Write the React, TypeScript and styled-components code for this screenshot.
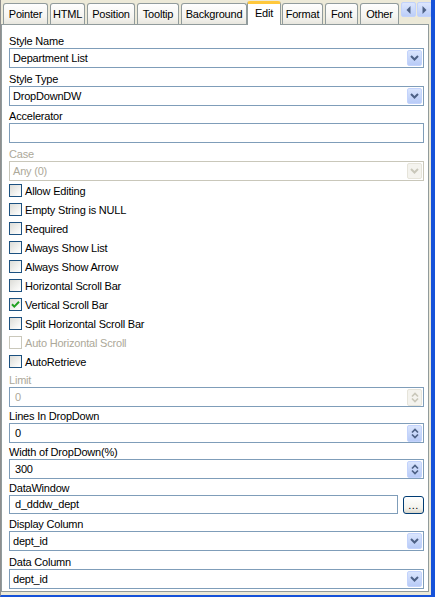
import React from "react";
import styled, { createGlobalStyle } from "styled-components";

const GlobalStyle = createGlobalStyle`
  html, body { margin: 0; padding: 0; }
  body { background: #ECE9D8; }
`;

const Window = styled.div`
  width: 435px;
  height: 597px;
  box-sizing: border-box;
  background: #ECE9D8;
  border-left: 1px solid #8E8E8E;
  border-right: 4px solid #1652D9;
  border-bottom: 2px solid #1652D9;
  display: flex;
  flex-direction: column;
  overflow: hidden;
  font-family: "Liberation Sans", Arial, sans-serif;
  font-size: 11px;
  letter-spacing: -0.2px;
  color: #000;
`;

const TabStrip = styled.div`
  height: 24px;
  flex: none;
  display: flex;
  align-items: flex-end;
  gap: 2px;
  padding-left: 2px;
  padding-right: 1px;
`;

const Tab = styled.div<{ $w: number; $sel?: boolean }>`
  width: ${(p) => p.$w}px;
  height: ${(p) => (p.$sel ? 24 : 21)}px;
  box-sizing: border-box;
  flex: none;
  display: flex;
  justify-content: center;
  padding-top: ${(p) => (p.$sel ? 3 : 4)}px;
  line-height: 13px;
  border: 1px solid #919B9C;
  border-bottom: none;
  border-radius: 3px 3px 0 0;
  background: ${(p) =>
    p.$sel
      ? "#FFFFFF"
      : "linear-gradient(#FEFEFE, #F5F4F0 65%, #E8E6DE)"};
  border-top: ${(p) => (p.$sel ? "3px solid #FFC83C" : "1px solid #919B9C")};
  margin: ${(p) => (p.$sel ? "0 -1px -1px -2px" : "0")};
  position: relative;
  z-index: ${(p) => (p.$sel ? 2 : 1)};
`;

const TabScroller = styled.div`
  margin-left: auto;
  align-self: flex-start;
  margin-top: 2px;
  display: flex;
  gap: 1px;
`;

const ScrollBtn = styled.div`
  width: 15px;
  height: 15px;
  box-sizing: border-box;
  border: 1px solid #C2D2FA;
  border-radius: 2px;
  background: linear-gradient(#DCE6FD, #BCCEF8);
  display: flex;
  align-items: center;
  justify-content: center;
`;

const Panel = styled.div`
  width: 428px;
  height: 568px;
  box-sizing: border-box;
  flex: none;
  border: 1px solid #919B9C;
  background: #FFFFFF;
  padding: 6px 4px 2px 7px;
  display: flex;
  flex-direction: column;
`;

const Label = styled.div<{ $h: number; $disabled?: boolean }>`
  height: ${(p) => p.$h}px;
  display: flex;
  align-items: flex-end;
  line-height: 13px;
  color: ${(p) => (p.$disabled ? "#ACA899" : "#000")};
`;

const FieldRow = styled.div`
  display: flex;
  align-items: flex-start;
  gap: 5px;
`;

const Box = styled.div<{ $h?: number; $disabled?: boolean; $pad?: number }>`
  flex: 1;
  height: ${(p) => p.$h ?? 20}px;
  box-sizing: border-box;
  border: 1px solid ${(p) => (p.$disabled ? "#C9C7BA" : "#7F9DB9")};
  background: #FFFFFF;
  display: flex;
  align-items: center;
  padding: 0 1px 0 ${(p) => p.$pad ?? 3}px;
  line-height: 13px;
  color: ${(p) => (p.$disabled ? "#ACA899" : "#000")};
`;

const Value = styled.span`
  flex: 1;
  white-space: nowrap;
`;

const DropBtn = styled.div<{ $disabled?: boolean }>`
  width: 15px;
  height: 16px;
  box-sizing: border-box;
  border: 1px solid ${(p) => (p.$disabled ? "#E6E4DA" : "#C3D3FC")};
  border-radius: 2px;
  background: ${(p) =>
    p.$disabled
      ? "#F4F3EE"
      : "linear-gradient(#DAE5FD, #B8CBF7)"};
  display: flex;
  align-items: center;
  justify-content: center;
`;

const SpinBtn = styled(DropBtn)`
  height: 17px;
`;

const BrowseBtn = styled.div`
  width: 21px;
  height: 18px;
  margin-top: 1px;
  box-sizing: border-box;
  border: 1px solid #003C74;
  border-radius: 3px;
  background: linear-gradient(#FFFFFF, #F3F2EC 70%, #D9D6CB);
  display: flex;
  align-items: flex-end;
  justify-content: center;
  line-height: 13px;
  padding-bottom: 1px;
  letter-spacing: 0.5px;
`;

const CheckList = styled.div`
  display: flex;
  flex-direction: column;
`;

const CheckRow = styled.div<{ $disabled?: boolean }>`
  height: 19px;
  display: flex;
  align-items: center;
  gap: 3px;
  line-height: 13px;
  color: ${(p) => (p.$disabled ? "#ACA899" : "#000")};
`;

const CheckText = styled.span`
  padding-top: 1px;
`;

const CheckBox = styled.span<{ $disabled?: boolean }>`
  width: 13px;
  height: 13px;
  box-sizing: border-box;
  flex: none;
  border: 1px solid ${(p) => (p.$disabled ? "#CAC8BB" : "#1C5180")};
  background: ${(p) =>
    p.$disabled ? "#FFFFFF" : "linear-gradient(135deg, #DCDCD7, #F6F6F4 70%, #FFFFFF)"};
  display: flex;
  align-items: center;
  justify-content: center;
`;

const Chevron = ({ color }: { color: string }) => (
  <svg width="9" height="6" viewBox="0 0 9 6">
    <path d="M1 1 L4.5 4.5 L8 1" fill="none" stroke={color} strokeWidth="2" />
  </svg>
);

const SpinArrows = ({ color }: { color: string }) => (
  <svg width="8" height="11" viewBox="0 0 8 11">
    <path d="M1 4.5 L4 1.5 L7 4.5" fill="none" stroke={color} strokeWidth="1.7" />
    <path d="M1 6.5 L4 9.5 L7 6.5" fill="none" stroke={color} strokeWidth="1.7" />
  </svg>
);

const Tri = ({ dir }: { dir: "left" | "right" }) => (
  <svg width="5" height="8" viewBox="0 0 5 8">
    <polygon
      points={dir === "left" ? "4.5,0 0.5,4 4.5,8" : "0.5,0 4.5,4 0.5,8"}
      fill="#4D6185"
    />
  </svg>
);

const Check = () => (
  <svg width="9" height="9" viewBox="0 0 9 9">
    <path d="M1 4.2 L3.3 6.6 L8 1.8" fill="none" stroke="#21A121" strokeWidth="2" />
  </svg>
);

const tabs = [
  { t: "Pointer", w: 45 },
  { t: "HTML", w: 35 },
  { t: "Position", w: 48 },
  { t: "Tooltip", w: 42 },
  { t: "Background", w: 66 },
  { t: "Edit", w: 34, sel: true },
  { t: "Format", w: 41 },
  { t: "Font", w: 33 },
  { t: "Other", w: 39 },
];

const checks: { t: string; checked?: boolean; disabled?: boolean }[] = [
  { t: "Allow Editing" },
  { t: "Empty String is NULL" },
  { t: "Required" },
  { t: "Always Show List" },
  { t: "Always Show Arrow" },
  { t: "Horizontal Scroll Bar" },
  { t: "Vertical Scroll Bar", checked: true },
  { t: "Split Horizontal Scroll Bar" },
  { t: "Auto Horizontal Scroll", disabled: true },
  { t: "AutoRetrieve" },
];

const Select = ({ value, disabled }: { value: string; disabled?: boolean }) => (
  <Box $disabled={disabled}>
    <Value>{value}</Value>
    <DropBtn $disabled={disabled}>
      <Chevron color={disabled ? "#C9C7BA" : "#4D6185"} />
    </DropBtn>
  </Box>
);

const Spin = ({ value, disabled }: { value: string; disabled?: boolean }) => (
  <Box $pad={5}>
    <Value style={disabled ? { color: "#ACA899" } : undefined}>{value}</Value>
    <SpinBtn $disabled={disabled}>
      <SpinArrows color={disabled ? "#C9C7BA" : "#4D6185"} />
    </SpinBtn>
  </Box>
);

export default function App() {
  return (
    <>
      <GlobalStyle />
      <Window>
        <TabStrip>
          {tabs.map((t) => (
            <Tab key={t.t} $w={t.w} $sel={t.sel}>
              {t.t}
            </Tab>
          ))}
          <TabScroller>
            <ScrollBtn>
              <Tri dir="left" />
            </ScrollBtn>
            <ScrollBtn>
              <Tri dir="right" />
            </ScrollBtn>
          </TabScroller>
        </TabStrip>
        <Panel>
          <Label $h={17}>Style Name</Label>
          <Select value="Department List" />
          <Label $h={18}>Style Type</Label>
          <Select value="DropDownDW" />
          <Label $h={17}>Accelerator</Label>
          <Box />
          <Label $h={18} $disabled>
            Case
          </Label>
          <Select value="Any (0)" disabled />
          <CheckList>
            {checks.map((c) => (
              <CheckRow key={c.t} $disabled={c.disabled}>
                <CheckBox $disabled={c.disabled}>{c.checked && <Check />}</CheckBox>
                <CheckText>{c.t}</CheckText>
              </CheckRow>
            ))}
          </CheckList>
          <Label $h={16} $disabled>
            Limit
          </Label>
          <Spin value="0" disabled />
          <Label $h={16}>Lines In DropDown</Label>
          <Spin value="0" />
          <Label $h={16}>Width of DropDown(%)</Label>
          <Spin value="300" />
          <Label $h={16}>DataWindow</Label>
          <FieldRow>
            <Box $h={19} $pad={5}>
              <Value>d_dddw_dept</Value>
            </Box>
            <BrowseBtn>...</BrowseBtn>
          </FieldRow>
          <Label $h={17}>Display Column</Label>
          <Select value="dept_id" />
          <Label $h={18}>Data Column</Label>
          <Select value="dept_id" />
        </Panel>
      </Window>
    </>
  );
}
